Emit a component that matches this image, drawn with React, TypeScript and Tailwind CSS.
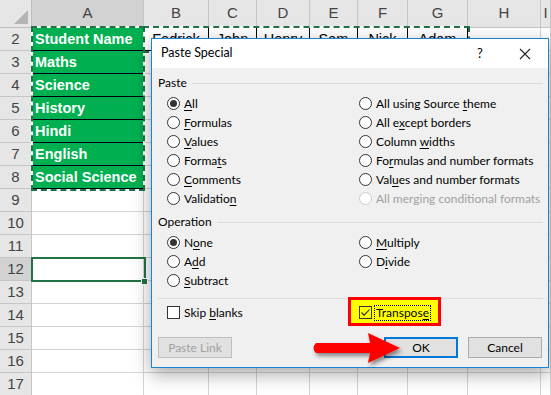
import React from "react";

const cols = ["A", "B", "C", "D", "E", "F", "G", "H", "I"];
const rowNums = [2, 3, 4, 5, 6, 7, 8, 9, 10, 11, 12, 13, 14, 15, 16, 17];
const subjects = ["Student Name", "Maths", "Science", "History", "Hindi", "English", "Social Science"];
const names = ["Fedrick", "John", "Henry", "Sam", "Nick", "Adam"];

function Sheet() {
  return (
    <div
      className="grid grid-cols-[32px_112px_65px_48px_53px_48px_50px_60px_73px_1fr] grid-rows-[28px_repeat(16,23px)] text-[14.5px] text-black"
      style={{ fontFamily: '"Liberation Sans", Arial, sans-serif' }}
    >
      {/* corner */}
      <div className="relative bg-[#e6e6e6] border-r border-b border-[#bdbdbd]">
        <div className="absolute right-[3px] bottom-[3px] w-0 h-0 border-l-[14px] border-l-transparent border-b-[14px] border-b-[#b4b4b4]" />
      </div>
      {cols.map((c) => (
        <div
          key={c}
          className={`flex items-center justify-center border-r border-b border-[#c6c6c6] text-[15px] text-[#444] ${
            c === "A" ? "bg-[#d2d2d2]" : "bg-[#e6e6e6]"
          }`}
        >
          {c}
        </div>
      ))}
      {rowNums.map((r) => (
        <React.Fragment key={r}>
          <div
            className={`flex items-center justify-center border-r border-b border-[#c6c6c6] text-[15px] text-[#444] ${
              r === 12 ? "bg-[#d2d2d2]" : "bg-[#e6e6e6]"
            }`}
          >
            {r}
          </div>
          {cols.map((c, ci) => {
            if (c === "A" && r <= 8) {
              return (
                <div
                  key={c}
                  className="flex items-center pl-[3px] pt-[1px] bg-[#00b050] border-r border-b border-black text-white font-bold whitespace-nowrap overflow-hidden"
                >
                  {subjects[r - 2]}
                </div>
              );
            }
            if (r === 2 && ci >= 1 && ci <= 6) {
              return (
                <div
                  key={c}
                  className="flex items-center justify-center pt-[2px] border-r border-b border-black whitespace-nowrap overflow-hidden"
                >
                  {names[ci - 1]}
                </div>
              );
            }
            return <div key={c} className="border-r border-b border-[#d4d4d4]" />;
          })}
        </React.Fragment>
      ))}
    </div>
  );
}

function Ants({ className }: { className: string }) {
  return (
    <div className={`absolute border-2 border-white ${className}`}>
      <div className="absolute -inset-[2px] border-2 border-dashed border-[#217346]" />
    </div>
  );
}

function Radio({
  label,
  u,
  checked,
  disabled,
}: {
  label: string;
  u?: number;
  checked?: boolean;
  disabled?: boolean;
}) {
  const parts =
    u === undefined
      ? [label, "", ""]
      : [label.slice(0, u), label.slice(u, u + 1), label.slice(u + 1)];
  return (
    <div className="flex items-center h-[19px] gap-[4px] whitespace-nowrap">
      <span
        className={`flex items-center justify-center w-[13px] h-[13px] rounded-full border bg-white ${
          disabled ? "border-[#cccccc]" : "border-[#333]"
        }`}
      >
        {checked && <span className="w-[7px] h-[7px] rounded-full bg-[#333]" />}
      </span>
      <span className={disabled ? "text-[#a0a0a0]" : "text-black"}>
        {parts[0]}
        <span className="underline underline-offset-2">{parts[1]}</span>
        {parts[2]}
      </span>
    </div>
  );
}

function GroupLabel({ text }: { text: string }) {
  return (
    <div className="flex items-center h-[16px] gap-[5px]">
      <span>{text}</span>
      <div className="flex-1 h-px bg-[#dcdcdc] mr-[-1px]" />
    </div>
  );
}

function Dialog() {
  return (
    <div
      className="absolute left-[151px] top-[38px] w-[398px] h-[330px] flex flex-col border border-[#1883d7] bg-[#f0f0f0] shadow-[0_6px_18px_rgba(0,0,0,0.35)] text-[12px] text-black"
      style={{ fontFamily: 'Lato, "Noto Sans", sans-serif' }}
    >
      <div className="h-[29px] shrink-0 bg-white flex items-center justify-between pl-[9px]">
        <span className="text-[12.5px]">Paste Special</span>
        <div className="flex items-center">
          <span className="text-[13px] w-[20px] text-center mr-[29px]">?</span>
          <svg width="12" height="12" viewBox="0 0 12 12" className="mr-[17px]">
            <path d="M1 1L11 11M11 1L1 11" stroke="#222" strokeWidth="1.1" />
          </svg>
        </div>
      </div>
      <div className="flex flex-col px-[6px]">
        <div className="mt-[7px]">
          <GroupLabel text="Paste" />
        </div>
        <div className="mt-[3px] pl-[9px] grid grid-cols-[192px_1fr]">
          <div className="flex flex-col">
            <Radio label="All" u={0} checked />
            <Radio label="Formulas" u={0} />
            <Radio label="Values" u={0} />
            <Radio label="Formats" u={5} />
            <Radio label="Comments" u={0} />
            <Radio label="Validation" u={9} />
          </div>
          <div className="flex flex-col">
            <Radio label="All using Source theme" u={17} />
            <Radio label="All except borders" u={5} />
            <Radio label="Column widths" u={7} />
            <Radio label="Formulas and number formats" u={2} />
            <Radio label="Values and number formats" u={3} />
            <Radio label="All merging conditional formats" disabled />
          </div>
        </div>
        <div className="mt-[6px]">
          <GroupLabel text="Operation" />
        </div>
        <div className="mt-[3px] pl-[9px] grid grid-cols-[192px_1fr]">
          <div className="flex flex-col">
            <Radio label="None" u={1} checked />
            <Radio label="Add" u={1} />
            <Radio label="Subtract" u={0} />
          </div>
          <div className="flex flex-col">
            <Radio label="Multiply" u={0} />
            <Radio label="Divide" u={1} />
          </div>
        </div>
        <div className="mt-[8px] h-px bg-[#dcdcdc] mr-[-1px]" />
        <div className="mt-[4px] pl-[9px] grid grid-cols-[192px_1fr]">
          <div className="flex items-center h-[19px] gap-[4px]">
            <span className="w-[13px] h-[13px] border border-[#333] bg-white" />
            <span>
              Skip <span className="underline underline-offset-2">b</span>lanks
            </span>
          </div>
          <div className="relative flex items-center h-[19px] gap-[2px]">
            <div className="absolute left-[-11px] top-[-6px] w-[93px] h-[29px] border-[3px] border-[#ff0000] bg-[#ffff00]" />
            <span className="relative w-[13px] h-[13px] border border-[#333] flex items-center justify-center">
              <svg width="11" height="11" viewBox="0 0 11 11">
                <path d="M1.5 5.5L4.2 8.2L9.5 2.5" fill="none" stroke="#222" strokeWidth="1.1" />
              </svg>
            </span>
            <span className="relative border border-dotted border-black px-[1px] leading-[14px]">
              Transpos<span className="underline underline-offset-2">e</span>
            </span>
          </div>
        </div>
        <div className="mt-[15px] flex items-center">
          <div className="w-[74px] h-[21px] flex items-center justify-center border border-[#bfbfbf] bg-[#e1e1e1] text-[#a0a0a0]">
            Paste Link
          </div>
          <div className="ml-auto w-[74px] h-[21px] flex items-center justify-center border-2 border-[#0078d7] bg-[#e1e1e1]">
            OK
          </div>
          <div className="ml-[10px] w-[74px] h-[21px] flex items-center justify-center border border-[#adadad] bg-[#e1e1e1]">
            Cancel
          </div>
        </div>
      </div>
    </div>
  );
}

function Arrow() {
  return (
    <svg className="absolute left-[300px] top-[325px]" width="110" height="48" viewBox="0 0 110 48">
      <defs>
        <filter id="sh" x="-20%" y="-30%" width="140%" height="170%">
          <feDropShadow dx="2" dy="3" stdDeviation="2" floodColor="#000" floodOpacity="0.45" />
        </filter>
      </defs>
      <path
        d="M16 18 L70 18 L68 8 L100 23 L68 38 L70 28 L16 28 Q11 23 16 18 Z"
        fill="#ff0000"
        filter="url(#sh)"
      />
    </svg>
  );
}

export default function App() {
  return (
    <div className="relative w-[551px] h-[395px] overflow-hidden bg-white">
      <Sheet />
      <Ants className="left-[31px] top-[26px] w-[114px] h-[165px]" />
      <Ants className="left-[143px] top-[26px] w-[327px] h-[27px]" />
      <div className="absolute left-[31px] top-[257px] w-[115px] h-[25px] border-2 border-[#217346]" />
      <div className="absolute left-[141px] top-[278px] w-[7px] h-[7px] bg-[#217346] border border-white" />
      <Dialog />
      <Arrow />
    </div>
  );
}
